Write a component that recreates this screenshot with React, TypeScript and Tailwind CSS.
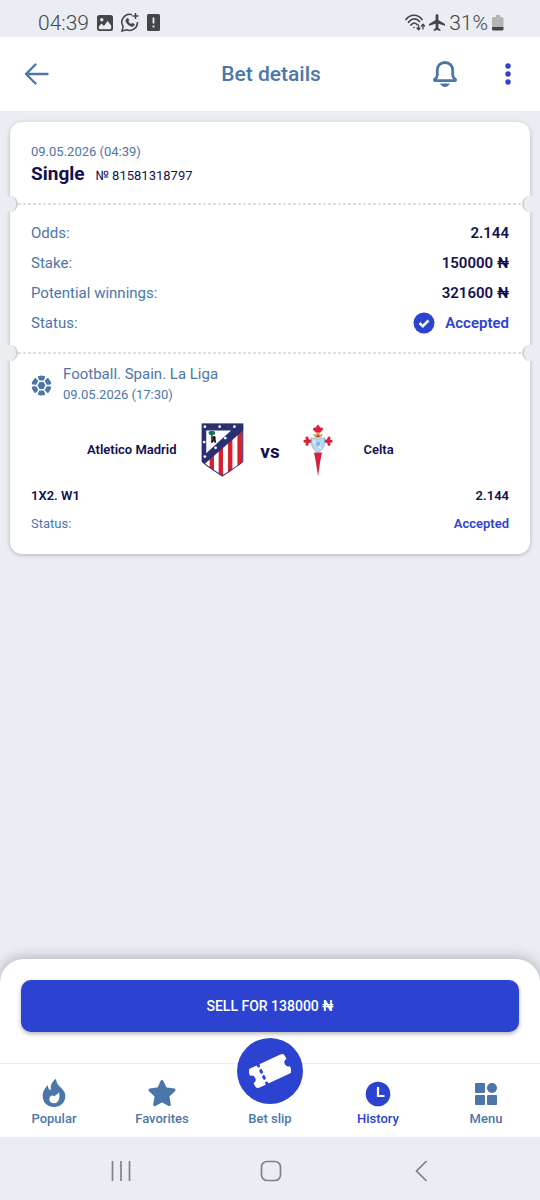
import React from 'react';

const summary = [
  { label: 'Odds:', value: '2.144' },
  { label: 'Stake:', value: '150000 ₦' },
  { label: 'Potential winnings:', value: '321600 ₦' },
];

function StatusBar() {
  return (
    <div className="h-[37px] pl-[38px] pr-9 pt-2 flex items-center justify-between text-[21px] leading-7 font-light text-[#444548]">
      <div className="flex items-center gap-2">
        <span>04:39</span>
        <svg className="w-4 h-4" viewBox="0 0 16 16">
          <path fillRule="evenodd" fill="currentColor" d="M2.500 0h11A2.500 2.500 0 0 1 16 2.500v11a2.500 2.500 0 0 1-2.500 2.500h-11A2.500 2.500 0 0 1 0 13.500v-11A2.500 2.500 0 0 1 2.500 0ZM1.800 11.500v1.500c0 .7.500 1.200 1.200 1.200h10c.7 0 1.200-.5 1.200-1.200v-2.500L10.500 6 7 11 4.500 8.500ZM4.800 3a1.700 1.700 0 1 0 0 3.400 1.700 1.700 0 0 0 0-3.400Z" />
        </svg>
        <svg className="w-[18px] h-[19px]" viewBox="0 0 18 19" fill="none" stroke="currentColor" strokeWidth="1.500">
          <path d="M11 1.700A7.800 7.800 0 0 0 2.200 13.500L1 18l4.600-1.200A7.800 7.800 0 0 0 16.400 9" />
          <path d="M14.500 0v6M11.500 3h6" />
          <path fill="currentColor" strokeWidth=".5" d="M6.200 5.400c.6-.3 1 0 1.200.5l.6 1.400c0 .5-.6.9-.8 1.300.7 1.300 1.700 2.100 2.900 2.600.5-.3.900-1.100 1.400-1l1.600.8c.5.300.1 1.400-.3 1.800-1 .9-2.300.7-3.600.1-2.200-1-3.600-2.600-4.300-4.600-.3-1.200.2-2.400 1.300-2.900Z" />
        </svg>
        <svg className="w-[13px] h-[17px]" viewBox="0 0 13 17">
          <rect x="0" y="0" width="13" height="17" rx="1.500" fill="currentColor" />
          <path d="M6.500 3.500v6M6.500 11.500v2" stroke="#eaedf2" strokeWidth="1.800" />
        </svg>
      </div>
      <div className="flex items-center gap-1">
        <svg className="w-5 h-[17px]" viewBox="0 0 20 17" fill="none" stroke="currentColor" strokeWidth="1.700" strokeLinecap="round">
          <path d="M1 5.500C5-.2 13-.2 17 5.500M3.500 8.300C6.500 4 11.500 4 14.500 7.500M6 11C7.800 8.400 10.200 8.400 12 10.500" />
          <circle cx="9" cy="13.500" r=".8" fill="currentColor" stroke="none" />
          <path strokeWidth="1.300" d="M13.500 11v4.500M12 14l1.500 1.700L15 14M18 15v-4.500M16.500 12l1.500-1.700 1.500 1.700" />
        </svg>
        <svg className="w-4 h-[17px]" viewBox="0 0 16 17" fill="currentColor">
          <path d="M8 0c.9 0 1.400 1 1.400 2v4L16 10v1.800l-6.600-2v4.100l2 1.500V17L8 16l-3.400 1v-1.600l2-1.500V9.800L0 11.800V10l6.600-4V2C6.600 1 7.100 0 8 0Z" />
        </svg>
        <span>31%</span>
        <svg className="w-3 h-4" viewBox="0 0 12 16">
          <path d="M4 0h4v2h2a1.500 1.500 0 0 1 1.500 1.500V12H0V3.500A1.500 1.500 0 0 1 1.500 2H4Z" fill="#b3b5b9" />
          <path d="M0 12h11.500v2A1.500 1.500 0 0 1 10 15.500H1.500A1.500 1.500 0 0 1 0 14Z" fill="currentColor" />
        </svg>
      </div>
    </div>
  );
}

function Header() {
  return (
    <header className="h-[74px] pl-6 pr-[22px] bg-white text-[#4c76aa] grid grid-cols-[1fr_auto_1fr] items-center">
      <button type="button" aria-label="Back" className="justify-self-start">
        <svg className="w-[26px] h-6" viewBox="0 0 26 24" fill="none" stroke="currentColor" strokeWidth="2.400" strokeLinecap="round" strokeLinejoin="round">
          <path d="M11.500 2.500 2 12l9.500 9.500M2 12h21.500" />
        </svg>
      </button>
      <h1 className="text-[21px] leading-7 font-medium">Bet details</h1>
      <div className="justify-self-end flex items-center gap-10">
        <button type="button" aria-label="Notifications">
          <svg className="w-[26px] h-[28px]" viewBox="0 0 26 28" fill="none" stroke="currentColor" strokeWidth="2.800" strokeLinejoin="round">
            <path d="M13 2.500c-4.800 0-7.700 3.400-7.700 8v4.500c0 2.300-1.200 3.300-2.600 4.400-.6.500-.3 1.200.4 1.200h19.800c.7 0 1-.7.400-1.200-1.400-1.100-2.600-2.100-2.600-4.400v-4.500c0-4.600-2.900-8-7.700-8Z" />
            <path d="M8.200 23.500h9.600c-.8 2.200-2.600 3.500-4.800 3.500s-4-1.300-4.800-3.500Z" fill="currentColor" stroke="none" />
          </svg>
        </button>
        <button type="button" aria-label="More" className="text-[#2c43d2] w-5 flex justify-center">
          <svg className="w-[6px] h-[22px]" viewBox="0 0 6 22" fill="currentColor">
            <circle cx="3" cy="3" r="2.700" />
            <circle cx="3" cy="11" r="2.700" />
            <circle cx="3" cy="19" r="2.700" />
          </svg>
        </button>
      </div>
    </header>
  );
}

// Perforated line with a round notch cut at both edges of the card
function Perforation() {
  return (
    <div className="relative h-[2px] mx-2 bg-[repeating-linear-gradient(90deg,#dedfe4_0_3px,transparent_3px_5px)]">
      <div className="absolute -left-[18px] -top-[7px] w-[18px] h-4 overflow-hidden">
        <div className="ml-[2px] w-4 h-4 rounded-full bg-[#eaedf2] border-r-2 border-[#d0d2d7]" />
      </div>
      <div className="absolute -right-[18px] -top-[7px] w-[18px] h-4 overflow-hidden">
        <div className="w-4 h-4 rounded-full bg-[#eaedf2] border-l-2 border-[#d0d2d7]" />
      </div>
    </div>
  );
}

function FootballIcon() {
  return (
    <svg className="w-[21px] h-[21px] text-[#4c76aa]" viewBox="-10.500 -10.500 21 21">
      <circle r="10" fill="currentColor" />
      <path d="M-2.900-5h5.800L5.800 0 2.900 5h-5.800L-5.800 0Z" fill="#fff" />
      <g stroke="#fff" fill="none">
        {[0, 60, 120, 180, 240, 300].map((a) => (
          <path key={a} d="M5.300 0H8.500M8-.2 11-1.300M8 .2 11 1.300" strokeWidth="1.400" transform={`rotate(${a})`} />
        ))}
      </g>
      <path d="M-2-3.500h4L4 0 2 3.500h-4L-4 0Z" fill="currentColor" />
    </svg>
  );
}

function AtleticoCrest() {
  return (
    <svg className="w-[43px] h-[54px]" viewBox="35 41 127 161">
      <path d="M37 43h123v114l-62 43-61-43Z" fill="#fff" />
      <path d="M60 145l13-12v50l-13-9ZM87 120l13-12v91l-13-6ZM115 94l13-12v98l-13 9ZM143 66l15-12v103l-15 11Z" fill="#d9202f" />
      <path fillRule="evenodd" d="M37 43h123v20L45 163l-8-7ZM50 63v68l74-68Z" fill="#2a2f73" />
      <path d="M38 44h121v112q-5 7-61 43-56-36-60-43Z" fill="none" stroke="#2a2f73" strokeWidth="3" />
      <g fill="#fff">
        <circle cx="46" cy="52" r="4" />
        <circle cx="90" cy="52" r="4" />
        <circle cx="134" cy="52" r="4" />
        <circle cx="44" cy="98" r="4" />
        <circle cx="46" cy="141" r="4" />
        <circle cx="78" cy="115" r="4" />
        <circle cx="107" cy="86" r="4" />
      </g>
      <path d="M64 76h5v22h-5Z" fill="#6b4a2a" />
      <path d="M57 71q-1-6 7-6h8q6 1 4 8-3 5-10 4-9 1-9-6Z" fill="#17764c" />
      <path d="M69 82l5-3 4 4v9l2 8h-5l-2-6-3 6h-6l4-8 1-6-4-2Z" fill="#17171c" />
    </svg>
  );
}

function CeltaCrest() {
  return (
    <svg className="w-[30px] h-[53px]" viewBox="338 43 90 158">
      <g fill="#dc1f3e">
        <path d="M383 44l7 9 7 1q3 7-4 10l-4 5h-12l-4-5q-7-3-4-10l7-1Z" />
        <path d="M371 128h24l-5 25-7 46-7-46Z" />
        <path d="M366 89h-10l-3-8q-7-3-8 4l3 4q-9 0-9 5t9 5l-3 5q2 6 8 3l3-8h10ZM400 89h10l3-8q7-3 8 4l-3 4q9 0 9 5t-9 5l3 5q-2 6-8 3l-3-8h-10Z" />
      </g>
      <path d="M373 83l-5-12 8 4 7-9 7 9 8-4-5 12Z" fill="#d6a252" />
      <path d="M377 82l6-9 6 9Z" fill="#b64242" />
      <path d="M363 84q20 7 40 0 4 31-20 44-24-13-20-44Z" fill="#b4dbf1" stroke="#6fa6c9" strokeWidth="2" />
      <path d="M369 93l24 24" stroke="#edf7fc" strokeWidth="4" />
      <path d="M377 96h12v9l-6 6-6-6Z" fill="#85b8da" />
    </svg>
  );
}

function TicketIcon() {
  return (
    <svg className="w-[42px] h-[42px]" viewBox="-63 -63 126 126">
      <g transform="rotate(-25)">
        <rect x="-60" y="-32" width="120" height="64" rx="11" fill="#fff" />
        <g fill="#2c43d2">
          <circle cx="-61" cy="0" r="12" />
          <circle cx="61" cy="0" r="12" />
          <rect x="-29" y="-36" width="9" height="12" rx="4" />
          <rect x="-29" y="-17" width="9" height="14" rx="4" />
          <rect x="-29" y="3" width="9" height="14" rx="4" />
          <rect x="-29" y="24" width="9" height="12" rx="4" />
        </g>
      </g>
    </svg>
  );
}

const tabs = [
  {
    label: 'Popular',
    icon: (
      <svg className="w-6 h-[30px]" viewBox="130 413 72 90">
        <path fill="currentColor" fillRule="evenodd" d="M172 415C173 428 178 434 188 443 197 452 200 460 200 468 200 487 185 500 166 500 147 500 132 487 132 467 132 452 140 443 147 434 148 443 150 448 156 450 155 434 160 423 172 415ZM181 456C177 463 171 463 168 468 158 462 152 469 152 477 152 485 158 489 166 489 180 489 185 474 181 456Z" />
      </svg>
    ),
  },
  {
    label: 'Favorites',
    icon: (
      <svg className="w-[30px] h-[30px]" viewBox="0 0 30 30" fill="currentColor" stroke="currentColor" strokeWidth="3" strokeLinejoin="round">
        <path d="M15 3.500 18.400 10.800 27 12.100 20.800 18 22.300 26.600 15 22.600 7.700 26.600 9.200 18 3 12.100 11.600 10.800Z" />
      </svg>
    ),
  },
  { label: 'Bet slip', raised: true, icon: <TicketIcon /> },
  {
    label: 'History',
    active: true,
    icon: (
      <svg className="w-[26px] h-[30px]" viewBox="0 0 26 30">
        <circle cx="13" cy="16" r="12.300" fill="currentColor" />
        <path d="M13 9v9h6.500" fill="none" stroke="#fff" strokeWidth="2.200" />
      </svg>
    ),
  },
  {
    label: 'Menu',
    icon: (
      <svg className="w-6 h-[30px]" viewBox="0 0 24 30" fill="currentColor">
        <rect x="1" y="5" width="10" height="10" rx="1" />
        <circle cx="18" cy="10" r="5" />
        <rect x="1" y="17" width="10" height="10" rx="1" />
        <rect x="13" y="17" width="10" height="10" rx="1" />
      </svg>
    ),
  },
];

export default function App() {
  return (
    <div className="min-h-screen flex flex-col bg-[#eaedf2] font-['Roboto',sans-serif]">
      <StatusBar />
      <Header />

      <main className="flex-1 px-[10px] pt-[11px] pb-6">
        <article className="bg-white rounded-xl shadow-[0_1px_4px_rgba(0,0,0,0.25)] text-[#130f4f]">
          <section className="px-[21px] pt-5 pb-[15px]">
            <p className="text-[13px] leading-5 text-[#4c76aa]">09.05.2026 (04:39)</p>
            <div className="flex items-baseline gap-[11px] leading-6">
              <h2 className="text-[19px] font-bold">Single</h2>
              <span className="text-[13px]">№ 81581318797</span>
            </div>
          </section>

          <Perforation />

          <section className="px-[21px] pt-[13px] pb-[14px]">
            <dl className="text-[15px] leading-[30px]">
              {summary.map((row) => (
                <div key={row.label} className="flex justify-between">
                  <dt className="text-[#4c76aa]">{row.label}</dt>
                  <dd className="font-semibold">{row.value}</dd>
                </div>
              ))}
              <div className="flex justify-between">
                <dt className="text-[#4c76aa]">Status:</dt>
                <dd className="flex items-center gap-[10px] font-semibold text-[#2c43d2]">
                  <svg className="w-[22px] h-[22px]" viewBox="0 0 22 22">
                    <circle cx="11" cy="11" r="10.500" fill="currentColor" />
                    <path d="M6.500 11l3.300 3.200 5.700-5.700" fill="none" stroke="#fff" strokeWidth="2.500" />
                  </svg>
                  Accepted
                </dd>
              </div>
            </dl>
          </section>

          <Perforation />

          <section className="px-[21px] pt-[10px] pb-4">
            <div className="flex items-center gap-[11px] text-[#4c76aa]">
              <FootballIcon />
              <div>
                <p className="text-[15px] leading-5">Football. Spain. La Liga</p>
                <p className="text-[13px] leading-[22px]">09.05.2026 (17:30)</p>
              </div>
            </div>

            <div className="mt-[17px] h-[54px] flex items-center gap-5 text-[13px] font-semibold">
              <span className="flex-1 text-right">Atletico Madrid</span>
              <div className="flex items-center">
                <div className="w-[52px] flex justify-center">
                  <AtleticoCrest />
                </div>
                <span className="w-[43px] text-center text-[19px] leading-7 pt-1 font-bold">vs</span>
                <div className="w-[52px] flex justify-center">
                  <CeltaCrest />
                </div>
              </div>
              <span className="flex-1">Celta</span>
            </div>

            <div className="mt-[5px] flex justify-between text-[13px] leading-7 font-semibold">
              <span>1X2. W1</span>
              <span>2.144</span>
            </div>
            <div className="flex justify-between text-[13px] leading-7">
              <span className="text-[#4c76aa]">Status:</span>
              <span className="font-semibold text-[#2c43d2]">Accepted</span>
            </div>
          </section>
        </article>
      </main>

      <footer className="bg-white rounded-t-[24px] shadow-[0_-1px_14px_rgba(0,0,0,0.28)]">
        <div className="px-[21px] pt-[21px] pb-[31px]">
          <button type="button" className="block w-full h-[52px] rounded-[10px] bg-[#2c43d2] text-white text-[14px] font-medium shadow-[0_2px_4px_rgba(0,0,0,0.3)]">
            SELL FOR 138000 ₦
          </button>
        </div>
        <nav className="h-[74px] pb-[9px] grid grid-cols-5 content-end items-end border-t border-[#eaedf4]">
          {tabs.map((tab) => (
            <button
              key={tab.label}
              type="button"
              className={`flex flex-col items-center text-[13px] leading-[18px] font-medium ${tab.active ? 'text-[#2c43d2]' : 'text-[#4c76aa]'}`}
            >
              {tab.raised ? (
                <span className="-mt-10 mb-[6px] w-[66px] h-[66px] rounded-full bg-[#2c43d2] flex items-center justify-center">{tab.icon}</span>
              ) : (
                <span className="mb-0.5">{tab.icon}</span>
              )}
              {tab.label}
            </button>
          ))}
        </nav>
      </footer>

      <div className="h-[63px] pl-[46px] pr-11 pt-1 bg-[#eaedf2] grid grid-cols-3 items-center justify-items-center text-[#808287]">
        <button type="button" aria-label="Recent apps">
          <svg className="w-5 h-[22px]" viewBox="0 0 20 22" stroke="currentColor" strokeWidth="1.700">
            <path d="M1.500 1v20M10 1v20M18.500 1v20" />
          </svg>
        </button>
        <button type="button" aria-label="Home">
          <svg className="w-[22px] h-[22px]" viewBox="0 0 22 22" fill="none" stroke="currentColor" strokeWidth="1.700">
            <rect x="1.500" y="1.500" width="19" height="19" rx="5.500" />
          </svg>
        </button>
        <button type="button" aria-label="System back">
          <svg className="w-3 h-[22px]" viewBox="0 0 12 22" fill="none" stroke="currentColor" strokeWidth="1.700">
            <path d="M11.500 1 1.500 11l10 10" />
          </svg>
        </button>
      </div>
    </div>
  );
}
